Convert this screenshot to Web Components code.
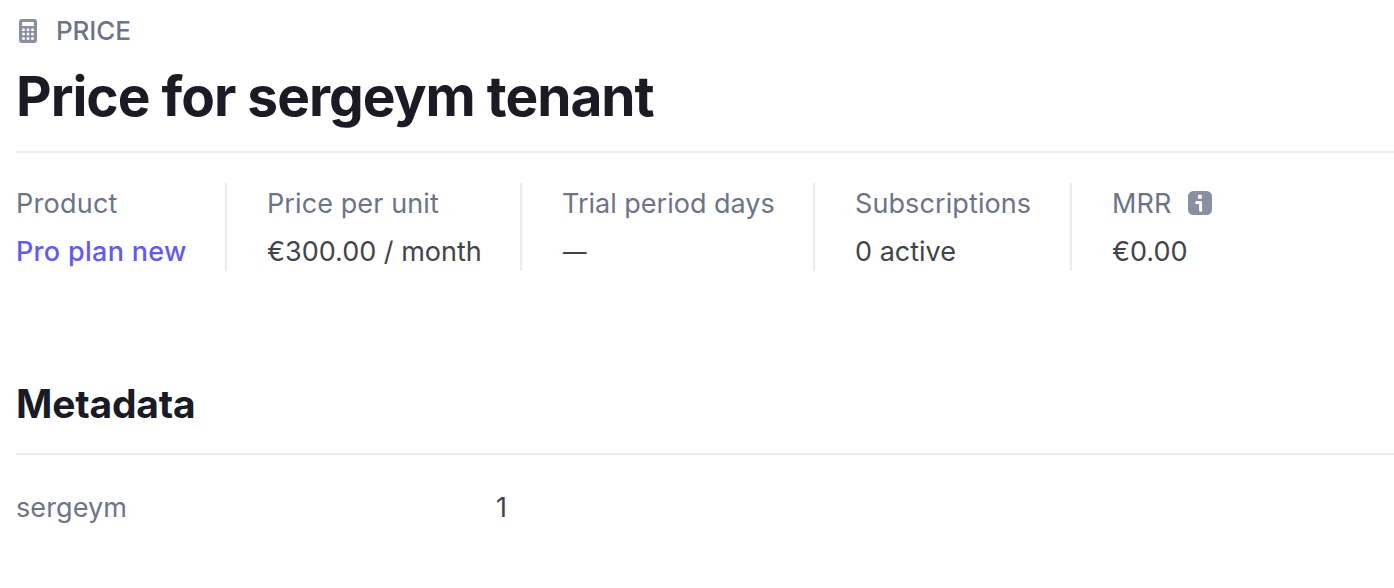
<!DOCTYPE html>
<html lang="en">
<head>
<meta charset="utf-8">
<title>Price for sergeym tenant</title>
<style>
  body {
    margin: 0;
    background: #fff;
    font-family: "Inter", sans-serif;
    overflow: hidden;
  }
</style>
</head>
<body>
<price-page></price-page>

<script>
class CalculatorIcon extends HTMLElement {
  constructor() {
    super();
    this.attachShadow({ mode: "open" }).innerHTML = `
      <style>
        :host { display: block; width: 18px; height: 24px; color: #8990a1; }
        svg { display: block; }
      </style>
      <svg width="18" height="24" viewBox="0 0 18 24">
        <path fill="currentColor" fill-rule="evenodd" d="M3 0h12a3 3 0 0 1 3 3v18a3 3 0 0 1-3 3H3a3 3 0 0 1-3-3V3a3 3 0 0 1 3-3zM3.7 3a.7.7 0 0 0-.7.7v2.6c0 .4.3.7.7.7h10.6c.4 0 .7-.3.7-.7V3.7a.7.7 0 0 0-.7-.7z"/>
        <g fill="#fff">
          <circle cx="4.5" cy="10.7" r="1.5"/><circle cx="9" cy="10.7" r="1.5"/><circle cx="13.5" cy="10.7" r="1.5"/>
          <circle cx="4.5" cy="15.1" r="1.5"/><circle cx="9" cy="15.1" r="1.5"/><circle cx="13.5" cy="15.1" r="1.5"/>
          <circle cx="4.5" cy="19.5" r="1.5"/><circle cx="9" cy="19.5" r="1.5"/><circle cx="13.5" cy="19.5" r="1.5"/>
        </g>
      </svg>
    `;
  }
}

class InfoIcon extends HTMLElement {
  constructor() {
    super();
    this.attachShadow({ mode: "open" }).innerHTML = `
      <style>
        :host { display: block; width: 24px; height: 24px; color: #8990a1; }
        svg { display: block; }
      </style>
      <svg width="24" height="24" viewBox="0 0 24 24">
        <rect width="24" height="24" rx="5.5" fill="currentColor"/>
        <circle cx="12" cy="5.7" r="2.2" fill="#fff"/>
        <path d="M8.6 11.400h4v7.800" fill="none" stroke="#fff" stroke-width="3" stroke-linecap="round" stroke-linejoin="round"/>
      </svg>
    `;
  }
}

class PageHeader extends HTMLElement {
  constructor() {
    super();
    this.attachShadow({ mode: "open" }).innerHTML = `
      <style>
        :host { display: block; height: 151px; border-bottom: 2px solid #ebeced; }
        .type {
          display: flex;
          align-items: center;
          gap: 19px;
          height: 62px;
          padding-left: 3px;
          font-size: 26px;
          font-weight: 450;
          color: #6c7486;
        }
        .type span { padding-bottom: 2px; letter-spacing: -0.1px; }
        h1 {
          margin: 0;
          font-size: 55px;
          font-weight: 700;
          line-height: 68px;
          letter-spacing: -1px;
          color: #1a1b25;
          white-space: nowrap;
        }
      </style>
      <div class="type">
        <calculator-icon></calculator-icon>
        <span><slot name="type"></slot></span>
      </div>
      <h1><slot></slot></h1>
    `;
  }
}

class SummaryItem extends HTMLElement {
  constructor() {
    super();
    this.attachShadow({ mode: "open" }).innerHTML = `
      <style>
        :host {
          display: flex;
          flex-direction: column;
          gap: 8px;
          box-sizing: border-box;
          height: 88px;
          padding: 1px 0 0 40px;
          border-right: 2px solid #ebeced;
          font-size: 27px;
          line-height: 40px;
          white-space: nowrap;
        }
        :host(:first-child) { padding-left: 0; }
        :host(:last-child) { border-right: 0; }
        .label { display: flex; align-items: center; gap: 17px; color: #6c7486; }
        .label span { letter-spacing: var(--label-spacing, 0); }
        ::slotted(info-icon) { margin-bottom: 2px; }
        .value { color: #414449; }
        :host([link]) .value { color: #635bea; font-weight: 500; letter-spacing: 0.3px; }
        :host([empty]) .value { padding-left: 1px; font-size: 23.5px; }
      </style>
      <div class="label"><span><slot name="label"></slot></span><slot name="icon"></slot></div>
      <div class="value"><slot></slot></div>
    `;
  }
}

class MetadataSection extends HTMLElement {
  constructor() {
    super();
    this.attachShadow({ mode: "open" }).innerHTML = `
      <style>
        :host { display: block; }
        h2 {
          margin: 0;
          height: 73px;
          border-bottom: 2px solid #ebeced;
          font-size: 39px;
          font-weight: 700;
          line-height: 48px;
          letter-spacing: -0.2px;
          color: #1a1b25;
        }
        .rows { padding-top: 33px; }
      </style>
      <h2><slot name="title"></slot></h2>
      <div class="rows"><slot></slot></div>
    `;
  }
}

class MetadataRow extends HTMLElement {
  constructor() {
    super();
    this.attachShadow({ mode: "open" }).innerHTML = `
      <style>
        :host {
          display: grid;
          grid-template-columns: 480px 1fr;
          font-size: 27px;
          line-height: 40px;
        }
        .key { color: #6c7486; letter-spacing: 0.1px; }
        .value { color: #414449; }
      </style>
      <div class="key"><slot name="key"></slot></div>
      <div class="value"><slot></slot></div>
    `;
  }
}

class PricePage extends HTMLElement {
  constructor() {
    super();
    this.attachShadow({ mode: "open" }).innerHTML = `
      <style>
        :host { display: block; padding-left: 16px; }
        .summary {
          display: grid;
          grid-template-columns: 211px 295px 293px 257px auto;
          margin: 30px 0 109px;
          --label-spacing: 0.1px;
        }
        .summary > :first-child { --label-spacing: 0.25px; }
        .summary > :nth-child(3) { --label-spacing: 0; }
      </style>
      <page-header><span slot="type">PRICE</span>Price for sergeym tenant</page-header>
      <div class="summary">
        <summary-item link><span slot="label">Product</span>Pro plan new</summary-item>
        <summary-item><span slot="label">Price per unit</span>€300.00 / month</summary-item>
        <summary-item empty><span slot="label">Trial period days</span>—</summary-item>
        <summary-item><span slot="label">Subscriptions</span>0 active</summary-item>
        <summary-item><span slot="label">MRR</span><info-icon slot="icon"></info-icon>€0.00</summary-item>
      </div>
      <metadata-section>
        <span slot="title">Metadata</span>
        <metadata-row><span slot="key">sergeym</span>1</metadata-row>
      </metadata-section>
    `;
  }
}

customElements.define("calculator-icon", CalculatorIcon);
customElements.define("info-icon", InfoIcon);
customElements.define("page-header", PageHeader);
customElements.define("summary-item", SummaryItem);
customElements.define("metadata-section", MetadataSection);
customElements.define("metadata-row", MetadataRow);
customElements.define("price-page", PricePage);
</script>
</body>
</html>
